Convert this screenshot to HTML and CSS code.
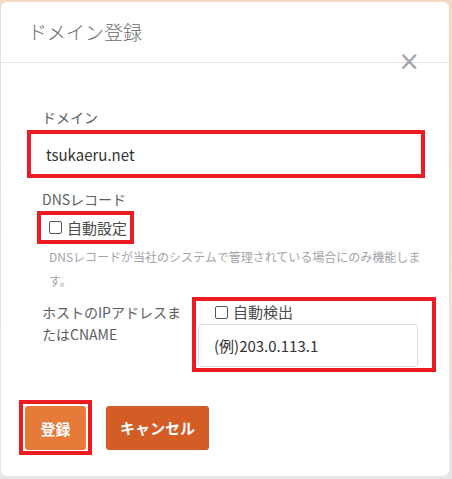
FILE: index.html
```html
<!DOCTYPE html>
<html lang="ja">
<head>
    <meta charset="UTF-8">
    <meta name="viewport" content="width=device-width, initial-scale=1.0">
    <title>ドメイン登録</title>
    <link rel="stylesheet" href="styles.css">
</head>
<body>
    <div class="modal">
        <div class="modal-header">
            <h1 class="modal-title">ドメイン登録</h1>
            <span class="modal-close">&times;</span>
        </div>
        <div class="modal-body">
            <div class="field-label">ドメイン</div>
            <div class="mark mark-domain">
                <div class="domain-input">tsukaeru.net</div>
            </div>

            <div class="field-label dns-label">DNSレコード</div>
            <div class="mark mark-auto">
                <label class="check"><span class="check-box"></span>自動設定</label>
            </div>
            <p class="help">DNSレコードが当社のシステムで管理されている場合にのみ機能します。</p>

            <div class="host-row">
                <div class="host-label">ホストのIPアドレスまたはCNAME</div>
                <div class="mark mark-host">
                    <label class="check check-detect"><span class="check-box"></span>自動検出</label>
                    <div class="host-input">(例)203.0.113.1</div>
                </div>
            </div>

            <div class="actions">
                <div class="mark mark-submit">
                    <button class="btn btn-submit">登録</button>
                </div>
                <button class="btn btn-cancel">キャンセル</button>
            </div>
        </div>
    </div>
</body>
</html>
```

FILE: styles.css
```css
:root {
    --mark-color: #ed1c24;
    --text-color: #5a5e64;
    --muted-color: #a0a4a8;
}
body{
    margin: 0;
    height: 479px;
    background: linear-gradient(180deg, #f4d8c8 0%, #ecdfd0 40%, #e6e6e6 100%);
    font-family: "Noto Sans CJK JP", "Noto Sans", sans-serif;
    color: var(--text-color);
}
.modal{
    position: relative;
    box-sizing: border-box;
    width: 448px;
    height: 474px;
    margin: 2px 0 0 1px;
    background: #fff;
    border-radius: 6px;
}
.modal-header{
    height: 60px;
    padding: 0 27px;
    border-bottom: 1px solid #e6e6e6;
}
.modal-title{
    margin: 0;
    padding-top: 17px;
    font-size: 19px;
    font-weight: 300;
    line-height: 26px;
    color: #6a6a6a;
}
.modal-close{
    position: absolute;
    right: 29px;
    top: 44px;
    font-family: "DejaVu Sans", sans-serif;
    font-size: 26px;
    line-height: 30px;
    color: #a0a5ad;
}
.modal-body{
    padding: 44px 0 0 26px;
}
.field-label{
    margin-left: 15px;
    font-size: 14px;
    line-height: 20px;
}
.mark{
    box-sizing: border-box;
    border: 4px solid var(--mark-color);
}
.mark-domain{
    width: 398px;
    height: 48px;
    margin-top: 3px;
    display: flex;
    align-items: center;
    padding-left: 15px;
}
.domain-input{
    font-size: 15px;
    color: #333;
}
.dns-label{
    margin-top: 11px;
}
.mark-auto{
    width: 97px;
    height: 33px;
    margin: 2px 0 0 10px;
    display: flex;
    align-items: center;
    padding-left: 8px;
}
.check{
    display: flex;
    align-items: center;
    gap: 5px;
    font-size: 15px;
    color: #4a4a4a;
}
.check-box{
    width: 11px;
    height: 11px;
    border: 1px solid #555;
    border-radius: 2px;
}
.help{
    margin: 1px 0 0 22px;
    width: 374px;
    font-size: 12px;
    line-height: 24px;
    color: var(--muted-color);
}
.host-row{
    display: flex;
    margin-top: 4px;
}
.host-label{
    width: 150px;
    margin: 4px 0 0 15px;
    font-size: 14px;
    line-height: 22px;
}
.mark-host{
    width: 244px;
    height: 75px;
    padding: 0 14px 0 2px;
}
.check-detect{
    margin: 1px 0 0 17px;
    line-height: 20px;
}
.host-input{
    height: 43px;
    box-sizing: border-box;
    margin-top: 2px;
    padding-left: 15px;
    border: 1px solid #dedede;
    border-radius: 3px;
    display: flex;
    align-items: center;
    font-size: 15px;
    color: #333;
}
.actions{
    display: flex;
    align-items: center;
    gap: 14px;
    margin: 28px 0 0 -8px;
}
.mark-submit{
    width: 73px;
    height: 55px;
    padding: 2px;
}
.btn{
    height: 44px;
    border: none;
    border-radius: 3px;
    font-family: inherit;
    font-size: 15px;
    font-weight: bold;
    color: #fff;
}
.btn-submit{
    width: 61px;
    background: #e57a39;
}
.btn-cancel{
    width: 103px;
    background: #d45d26;
}
```
